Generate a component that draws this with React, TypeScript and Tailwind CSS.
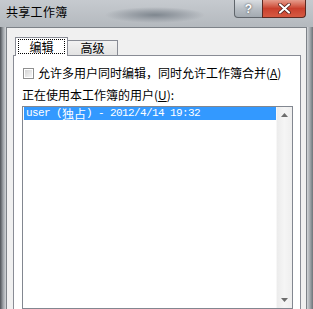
import React from 'react';

const cjk = { fontFamily: '"Noto Sans CJK SC", "Liberation Sans", sans-serif' };
const mono = { fontFamily: '"Liberation Mono", "Noto Sans CJK SC", monospace' };

function CaptionButtons() {
  return (
    <div className="ml-auto mr-[7px] flex items-start">
      <div className="w-[29px] h-[18px] border border-t-0 border-[#5f656b] rounded-bl-[4px] bg-gradient-to-b from-[#d9dde1] via-[#b9bfc5] to-[#a3aab1] flex items-center justify-center">
        <span className="text-[12px] font-bold text-white leading-none [text-shadow:0_0_2px_#333]" style={{ fontFamily: '"Liberation Sans", sans-serif' }}>?</span>
      </div>
      <div className="w-[44px] h-[18px] -ml-px border border-t-0 border-[#5c2a22] rounded-br-[4px] bg-gradient-to-b from-[#e59c8c] via-[#c9402d] to-[#d65a42] flex items-center justify-center">
        <svg width="13" height="11" viewBox="0 0 13 11">
          <path d="M2 1.5 L11 9.5 M11 1.5 L2 9.5" stroke="#4a1a14" strokeWidth="3.6" strokeLinecap="round" />
          <path d="M2 1.5 L11 9.5 M11 1.5 L2 9.5" stroke="#ffffff" strokeWidth="2.2" strokeLinecap="round" />
        </svg>
      </div>
    </div>
  );
}

function TitleBar() {
  return (
    <div className="h-[27px] shrink-0 flex items-start bg-[radial-gradient(ellipse_50px_8px_at_155px_15px,#7f878f_0%,#9aa0a7_45%,transparent_100%),linear-gradient(to_bottom,#c6cacf,#b4b9be)]">
      <span className="pl-[6px] pt-[4px] text-[12px] leading-[16px] tracking-[0.3px] text-black" style={cjk}>
        共享工作簿
      </span>
      <CaptionButtons />
    </div>
  );
}

function Tabs() {
  return (
    <div className="flex items-end h-[18px] pl-[2px]">
      <div className="relative z-10 -mb-px w-[53px] h-[19px] border border-b-0 border-[#898c95] bg-white flex justify-center pt-px">
        <span className="h-[15px] w-[47px] border border-dotted border-black flex items-center justify-center text-[12px] leading-none text-black" style={cjk}>
          编辑
        </span>
      </div>
      <div className="-ml-px w-[51px] h-[15px] border border-b-0 border-[#898c95] bg-gradient-to-b from-[#f2f2f2] to-[#e3e3e3] flex items-center justify-center text-[12px] leading-none text-black" style={cjk}>
        高级
      </div>
    </div>
  );
}

function ScrollArrow({ up }: { up: boolean }) {
  return (
    <div className="h-[16px] flex items-center justify-center">
      <svg width="7" height="4" viewBox="0 0 7 4">
        <path d={up ? 'M0 4 L3.5 0 L7 4 Z' : 'M0 0 L3.5 4 L7 0 Z'} fill="#6d6d6d" />
      </svg>
    </div>
  );
}

function UserList() {
  return (
    <div className="mt-[3px] h-[203px] shrink-0 border border-[#828790] bg-white flex">
      <div className="flex-1 pl-px">
        <div className="h-[13px] bg-[#3399ff] text-white flex items-center pl-[2px] text-[11px] leading-none tracking-[-0.6px] whitespace-pre" style={mono}>
          <span>user (</span>
          <span className="text-[12px] tracking-[0px]" style={cjk}>独占</span>
          <span>) - 2012/4/14 19:32</span>
        </div>
      </div>
      <div className="w-[16px] bg-gradient-to-r from-[#ececec] via-[#f5f5f5] to-[#eeeeee] border-l border-[#f7f7f7] flex flex-col justify-between">
        <ScrollArrow up />
        <ScrollArrow up={false} />
      </div>
    </div>
  );
}

export default function App() {
  return (
    <div className="w-[313px] h-[309px] overflow-hidden flex flex-col bg-[#b8bdc2]" style={cjk}>
      <TitleBar />
      <div className="flex">
        <div className="w-[6px] shrink-0 bg-gradient-to-r from-[#4e5257] via-[#9ca1a6] to-[#d2d5d8]" />
        <div className="w-[301px] shrink-0 border-l border-t border-r border-[#7d8288] bg-[#f0f0f0] pt-[9px] pl-[6px] pr-[5px]">
          <Tabs />
          <div className="border border-[#898c95] bg-white pl-[8px] pr-[7px] pt-[9px] pb-[10px]">
            <div className="h-[16px] flex items-center gap-[4px] ml-px">
              <div className="w-[11px] h-[11px] border border-[#8f8f8f] bg-white p-px">
                <div className="w-full h-full bg-gradient-to-br from-[#d4d4d4] to-[#f6f6f6]" />
              </div>
              <span className="text-[12px] leading-[16px] text-black whitespace-nowrap">
                允许多用户同时编辑，同时允许工作簿合并(<span className="underline">A</span>)
              </span>
            </div>
            <div className="mt-[6px] h-[16px] text-[12px] leading-[16px] text-black whitespace-nowrap">
              正在使用本工作簿的用户(<span className="underline">U</span>):
            </div>
            <UserList />
          </div>
        </div>
        <div className="w-[6px] shrink-0 bg-gradient-to-r from-[#d2d5d8] via-[#a3a8ad] to-[#6e7378]" />
      </div>
    </div>
  );
}
